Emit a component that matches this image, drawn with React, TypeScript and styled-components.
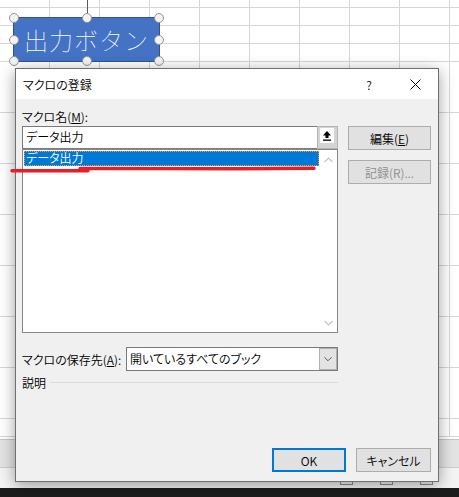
import React from "react";
import styled, { createGlobalStyle } from "styled-components";

const GlobalStyle = createGlobalStyle`
  *, *::before, *::after { box-sizing: border-box; }
  html, body { margin: 0; padding: 0; }
  body {
    width: 459px;
    height: 497px;
    overflow: hidden;
    background: #fff;
    font-family: "Noto Sans CJK JP", "Noto Sans", sans-serif;
  }
`;

const Screen = styled.div`
  position: relative;
  width: 459px;
  height: 497px;
  overflow: hidden;
  display: flex;
  flex-direction: column;
  background: #fff;
`;

const Sheet = styled.div`
  flex: none;
  height: 439px;
  overflow: hidden;
  display: grid;
  grid-template-columns: repeat(10, 50px);
  grid-template-rows: 8px repeat(3, 18px) repeat(7, 51px) 18px;
`;

const Cell = styled.div`
  border-right: 1px solid #d6d6d6;
  border-bottom: 1px solid #d6d6d6;
`;

const TabBar = styled.div`
  flex: none;
  height: 29px;
  background: #e3e3e3;
  border-top: 1px solid #c4c4c4;
  border-bottom: 1px solid #cdcdcd;
`;

const StatusBar = styled.div`
  flex: none;
  height: 20px;
  background: #f3f3f3;
  display: flex;
  justify-content: flex-end;
  align-items: flex-start;
  gap: 27px;
  padding: 8px 26px 0 0;
`;

const ViewIcon = styled.span`
  width: 13px;
  height: 9px;
  border: 1px solid #8a8a8a;
`;

const Taskbar = styled.div`
  flex: none;
  height: 9px;
  background: #1c1c1c;
`;

/* 選択中の図形 */
const Shape = styled.div`
  position: absolute;
  left: 13px;
  top: 17px;
  width: 147px;
  height: 45px;
  background: #4472c4;
  border: 1px solid #2f528f;
  display: flex;
  align-items: center;
  justify-content: center;
  color: #fff;
  font-size: 24px;
  font-weight: 100;
  letter-spacing: 1px;
`;

const RotateStem = styled.span`
  position: absolute;
  left: 50%;
  top: -18px;
  width: 1px;
  height: 18px;
  background: #5a5a5a;
`;

const Handle = styled.span<{ $x: number; $y: number }>`
  position: absolute;
  left: ${(p) => p.$x}%;
  top: ${(p) => p.$y}%;
  width: 10px;
  height: 10px;
  margin: -5px 0 0 -5px;
  border-radius: 50%;
  background: #f3f3f3;
  border: 1.5px solid #949494;
`;

const Annotation = styled.svg`
  position: absolute;
  left: 8px;
  top: 163px;
  pointer-events: none;
`;

/* ダイアログ */
const Dialog = styled.div`
  position: absolute;
  left: 15px;
  top: 68px;
  width: 424px;
  height: 414px;
  border: 1px solid #6f6f6f;
  background: #f0f0f0;
  box-shadow: 0 3px 14px rgba(0, 0, 0, 0.38);
  display: flex;
  flex-direction: column;
  font-size: 12px;
  font-weight: 350;
  color: #000;
  font-feature-settings: "palt";
`;

const TitleBar = styled.div`
  flex: none;
  height: 30px;
  background: #fff;
  display: flex;
  align-items: center;
  padding-left: 7px;
`;

const Title = styled.span`
  flex: 1;
`;

const CaptionButton = styled.span`
  width: 46px;
  height: 30px;
  display: flex;
  align-items: center;
  justify-content: center;
  font-size: 12px;
`;

const Body = styled.div`
  flex: 1;
  display: flex;
  flex-direction: column;
  padding: 10px 7px 9px 6px;
`;

const Main = styled.div`
  display: flex;
  justify-content: space-between;
`;

const LeftCol = styled.div`
  width: 316px;
  display: flex;
  flex-direction: column;
`;

const Label = styled.div`
  height: 15px;
  line-height: 15px;
  margin-bottom: 2px;
  white-space: nowrap;
`;

const InputRow = styled.div`
  display: flex;
  height: 23px;
`;

const TextBox = styled.div`
  flex: 1;
  background: #fff;
  border: 1px solid #7a7a7a;
  border-right: none;
  padding-left: 3px;
  line-height: 20px;
`;

const CollapseButton = styled.div`
  width: 21px;
  background: #d4d4d4;
  border: 1px solid #b4b4b4;
  padding: 1px 2px 0 2px;
`;

const CollapseFace = styled.div`
  width: 14px;
  height: 15px;
  background: #fff;
  display: flex;
  align-items: center;
  justify-content: center;
`;

const ListBox = styled.div`
  height: 184px;
  background: #fff;
  border: 1px solid #828790;
  display: flex;
`;

const Items = styled.div`
  flex: 1;
  padding: 1px 0 0 1px;
`;

const Item = styled.div<{ $selected?: boolean }>`
  height: 15px;
  line-height: 14px;
  padding-left: 2px;
  background: ${(p) => (p.$selected ? "#0078d7" : "transparent")};
  color: ${(p) => (p.$selected ? "#fff" : "#000")};
  outline: ${(p) => (p.$selected ? "1px dotted #f5a31a" : "none")};
  outline-offset: -1px;
`;

const ScrollBar = styled.div`
  width: 18px;
  display: flex;
  flex-direction: column;
  justify-content: space-between;
`;

const ScrollArrow = styled.div`
  height: 19px;
  display: flex;
  align-items: center;
  justify-content: center;
`;

const FieldRow = styled.div`
  display: flex;
  align-items: center;
  margin-top: 14px;
  height: 24px;
`;

const FieldLabel = styled.span`
  width: 104px;
  white-space: nowrap;
`;

const ComboBox = styled.div`
  flex: 1;
  height: 24px;
  display: flex;
  background: #fff;
  border: 1px solid #7a7a7a;
`;

const ComboText = styled.span`
  flex: 1;
  padding-left: 3px;
  line-height: 22px;
`;

const DropButton = styled.span`
  width: 18px;
  background: #e3e3e3;
  border: 1px solid #b0b0b0;
  display: flex;
  align-items: center;
  justify-content: center;
`;

const GroupRow = styled.div`
  display: flex;
  align-items: center;
  height: 16px;
  margin-top: 3px;
`;

const Rule = styled.span`
  flex: 1;
  height: 1px;
  margin-left: 4px;
  background: #dcdcdc;
`;

const RightCol = styled.div`
  width: 83px;
  padding-top: 17px;
  display: flex;
  flex-direction: column;
  gap: 10px;
`;

const Button = styled.div<{ $primary?: boolean; $disabled?: boolean; $w?: number }>`
  width: ${(p) => (p.$w ? `${p.$w}px` : "100%")};
  height: 24px;
  display: flex;
  align-items: center;
  justify-content: center;
  background: #e1e1e1;
  border: ${(p) => (p.$primary ? "2px solid #0078d7" : "1px solid #adadad")};
  color: ${(p) => (p.$disabled ? "#8d8d8d" : "#000")};
  white-space: nowrap;
`;

const Footer = styled.div`
  margin-top: auto;
  display: flex;
  justify-content: flex-end;
  gap: 10px;
`;

const Chevron: React.FC<{ up?: boolean; color: string; w?: number }> = ({ up, color, w = 9 }) => (
  <svg width={w} height="6" viewBox="0 0 9 6">
    <polyline
      points={up ? "0.5,5 4.5,1 8.5,5" : "0.5,1 4.5,5 8.5,1"}
      fill="none"
      stroke={color}
      strokeWidth="1.1"
    />
  </svg>
);

const handles: [number, number][] = [
  [0, 0], [50, 0], [100, 0],
  [0, 50], [100, 50],
  [0, 100], [50, 100], [100, 100],
];

const App: React.FC = () => {
  return (
    <Screen>
      <GlobalStyle />
      <Sheet>
        {Array.from({ length: 120 }, (_, i) => (
          <Cell key={i} />
        ))}
      </Sheet>
      <TabBar />
      <StatusBar>
        <ViewIcon />
        <ViewIcon />
        <ViewIcon />
      </StatusBar>
      <Taskbar />

      <Shape>
        <RotateStem />
        出力ボタン
        {handles.map(([x, y]) => (
          <Handle key={`${x}-${y}`} $x={x} $y={y} />
        ))}
      </Shape>

      <Dialog>
        <TitleBar>
          <Title>マクロの登録</Title>
          <CaptionButton>?</CaptionButton>
          <CaptionButton>
            <svg width="11" height="11" viewBox="0 0 11 11">
              <path d="M0.5 0.5 L10.5 10.5 M10.5 0.5 L0.5 10.5" stroke="#000" strokeWidth="1" />
            </svg>
          </CaptionButton>
        </TitleBar>
        <Body>
          <Main>
            <LeftCol>
              <Label>
                マクロ名(<u>M</u>):
              </Label>
              <InputRow>
                <TextBox>データ出力</TextBox>
                <CollapseButton>
                  <CollapseFace>
                    <svg width="10" height="11" viewBox="0 0 10 11">
                      <path d="M5 1 L1 5.5 H3.5 V8 H6.5 V5.5 H9 Z" fill="#000" />
                      <rect x="1" y="9.5" width="8" height="1.3" fill="#000" />
                    </svg>
                  </CollapseFace>
                </CollapseButton>
              </InputRow>
              <ListBox>
                <Items>
                  <Item $selected>データ出力</Item>
                </Items>
                <ScrollBar>
                  <ScrollArrow>
                    <Chevron up color="#c4c4c4" />
                  </ScrollArrow>
                  <ScrollArrow>
                    <Chevron color="#c4c4c4" />
                  </ScrollArrow>
                </ScrollBar>
              </ListBox>
              <FieldRow>
                <FieldLabel>
                  マクロの保存先(<u>A</u>):
                </FieldLabel>
                <ComboBox>
                  <ComboText>開いているすべてのブック</ComboText>
                  <DropButton>
                    <Chevron color="#555" w={8} />
                  </DropButton>
                </ComboBox>
              </FieldRow>
              <GroupRow>
                <span>説明</span>
                <Rule />
              </GroupRow>
            </LeftCol>
            <RightCol>
              <Button>
                編集(<u>E</u>)
              </Button>
              <Button $disabled>記録(R)...</Button>
            </RightCol>
          </Main>
          <Footer>
            <Button $primary $w={74}>
              OK
            </Button>
            <Button $w={75}>キャンセル</Button>
          </Footer>
        </Body>
      </Dialog>

      <Annotation width="310" height="12" viewBox="0 0 310 12">
        <path
          d="M4 7.7 L80 7.7 M72 5.4 L229 5.8 L306 5.3"
          stroke="#e81d25"
          strokeWidth="3.4"
          strokeLinecap="round"
          fill="none"
        />
      </Annotation>
    </Screen>
  );
};

export default App;
